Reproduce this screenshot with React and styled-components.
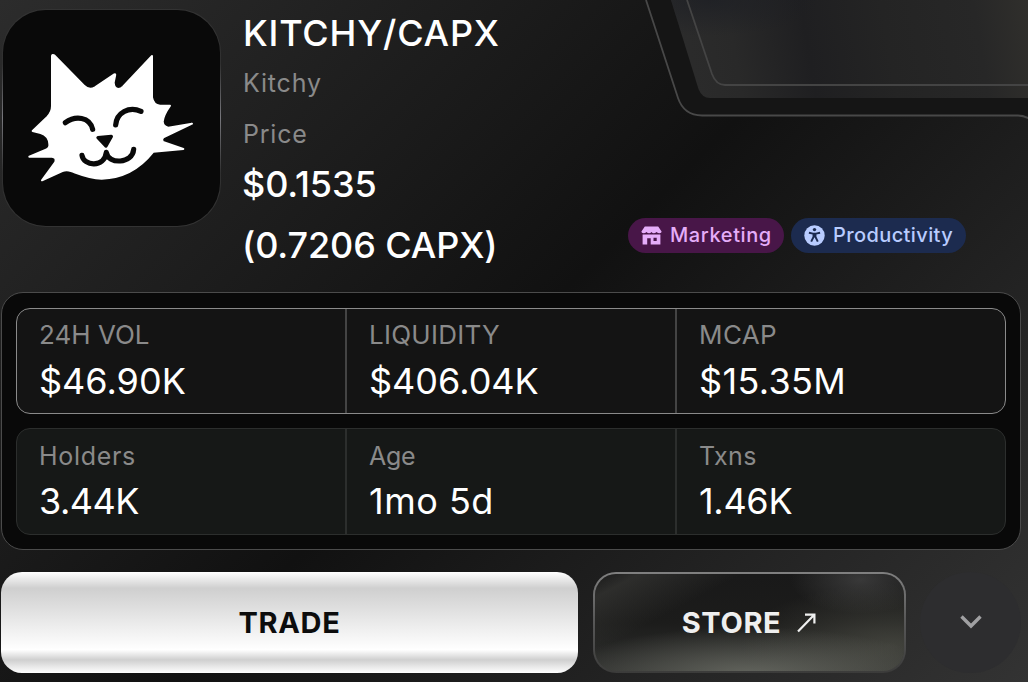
import React from "react";
import styled, { createGlobalStyle } from "styled-components";

const GlobalStyle = createGlobalStyle`
  * { box-sizing: border-box; }
  body {
    margin: 0;
    background: #1a1a1a;
    font-family: Inter, "Liberation Sans", sans-serif;
    -webkit-font-smoothing: antialiased;
  }
`;

const Page = styled.main`
  position: relative;
  width: 1028px;
  height: 682px;
  overflow: hidden;
  background: linear-gradient(135deg, #2c2c2c 0%, #111111 50%, #333333 100%);
`;

const Frame = styled.svg`
  position: absolute;
  top: 0;
  right: 0;
  width: 388px;
  height: 130px;
`;

const Content = styled.div`
  position: relative;
  display: flex;
  flex-direction: column;
  padding-left: 1px;
`;

const Header = styled.header`
  display: flex;
  height: 292px;
  padding: 9px 62px 0 1px;
`;

const Avatar = styled.div`
  flex: none;
  width: 219px;
  height: 218px;
  border-radius: 44px;
  padding: 1px;
  background: linear-gradient(180deg, #333 0%, #303030 25%, #77777c 50%, #303030 75%, #333 100%);
  svg { display: block; }
`;

const AvatarFace = styled.div`
  width: 217px;
  height: 216px;
  border-radius: 43px;
  overflow: hidden;
  background: #090909;
`;

const Identity = styled.div`
  display: flex;
  flex-direction: column;
  margin-left: 22px;
  padding-top: 2px;
  white-space: nowrap;
`;

const Title = styled.h1`
  margin: 0;
  font-size: 36px;
  font-weight: 500;
  line-height: 44px;
  letter-spacing: 0.8px;
  color: #fff;
`;

const Muted = styled.div`
  margin-top: ${(p) => p.$gap}px;
  font-size: 25px;
  font-weight: 400;
  line-height: 32px;
  letter-spacing: 0.8px;
  color: #8a8a8a;
`;

const Price = styled.div`
  margin: ${(p) => p.$gap}px 0 0 -1px;
  font-size: 36px;
  font-weight: 500;
  line-height: 44px;
  letter-spacing: -0.1px;
  color: #fff;
`;

const Chips = styled.div`
  display: flex;
  gap: 7px;
  align-self: flex-end;
  margin: 0 0 39px auto;
`;

const Chip = styled.span`
  display: flex;
  align-items: center;
  gap: 8px;
  width: ${(p) => p.$width}px;
  height: 35px;
  padding-left: 13px;
  border-radius: 18px;
  background: ${(p) => p.$bg};
  color: ${(p) => p.$fg};
  font-size: 20px;
  font-weight: 500;
  line-height: 34px;
  letter-spacing: ${(p) => p.$spacing}px;
  white-space: nowrap;
  svg { flex: none; }
`;

const ChipText = styled.span`
  height: 35px;
`;

const Panel = styled.section`
  display: flex;
  flex-direction: column;
  gap: 14px;
  width: 1020px;
  height: 258px;
  padding: 15px 14px 14px;
  border: 1px solid #4b4b4b;
  border-radius: 22px;
  background: #090909;
`;

const StatRow = styled.div`
  flex: none;
  display: grid;
  grid-template-columns: 330px 330px 1fr;
  height: ${(p) => (p.$bright ? 106 : 107)}px;
  border: 1px solid ${(p) => (p.$bright ? "#8a8a8a" : "#2c2e2d")};
  border-radius: 14px;
  background: ${(p) => (p.$bright ? "#141414" : "#161817")};
  --divider: ${(p) => (p.$bright ? "#444" : "#2c2e2d")};
  --top: ${(p) => (p.$bright ? 10 : 11)}px;
`;

const Stat = styled.div`
  padding: var(--top) 0 0 22px;
  white-space: nowrap;
  &:not(:last-child) { border-right: 2px solid var(--divider); }
`;

const StatLabel = styled.div`
  font-size: ${(p) => (p.$caps ? 26 : 25)}px;
  font-weight: 400;
  line-height: 32px;
  letter-spacing: ${(p) => p.$spacing}px;
  color: #8a8a8a;
`;

const StatValue = styled.div`
  margin-top: ${(p) => p.$gap}px;
  font-size: 36px;
  font-weight: 400;
  line-height: 44px;
  letter-spacing: ${(p) => p.$spacing}px;
  color: #fff;
`;

const Actions = styled.footer`
  display: flex;
  align-items: center;
  margin-top: 22px;
  height: 101px;
`;

const Button = styled.button`
  display: flex;
  align-items: center;
  justify-content: center;
  height: 101px;
  padding: 0;
  border: 0;
  font-family: inherit;
  font-size: 29px;
  font-weight: 700;
  letter-spacing: 0.65px;
`;

const TradeButton = styled(Button)`
  width: 577px;
  border-radius: 21px;
  color: #0c0c0c;
  background: linear-gradient(180deg, #fff 0%, #cfcfcf 16%, #f2f2f2 60%, #fff 77%, #cfcfcf 87%, #fff 100%);
`;

const StoreButton = styled(Button)`
  width: 313px;
  margin-left: 15px;
  padding-right: 1px;
  gap: 16px;
  color: #efefef;
  border: 2px solid transparent;
  border-radius: 23px;
  background:
    radial-gradient(ellipse 190px 48px at 50% 104%, rgba(108, 110, 102, 0.85), rgba(108, 110, 102, 0)) padding-box,
    radial-gradient(ellipse 150px 62px at 96% 74%, rgba(84, 85, 76, 0.6), rgba(84, 85, 76, 0)) padding-box,
    linear-gradient(152deg, rgba(60, 60, 58, 0) 0%, rgba(62, 62, 59, 0.55) 9%, rgba(26, 26, 26, 0) 30%, rgba(26, 26, 26, 0) 100%) padding-box,
    radial-gradient(ellipse 70px 34px at 86% 6%, rgba(70, 70, 70, 0.7), rgba(70, 70, 70, 0)) padding-box,
    linear-gradient(180deg, #191919, #1c1c1b 50%, #2f302e 100%) padding-box,
    linear-gradient(180deg, #808080, #5a5a5a 45%, #3b3b3a 100%) border-box;
`;

const MoreButton = styled(Button)`
  width: 101px;
  margin-left: 14px;
  padding-bottom: 1px;
  border-radius: 50%;
  background: #2d2d2f;
`;

function CatLogo() {
  return (
    <svg width="217" height="216" viewBox="9 30 651 648">
      <path
        fill="#fff"
        stroke="#fff"
        strokeWidth="6"
        strokeLinejoin="round"
        d="M156 168Q157 163 163 166L252 257Q267 272 285 262L343 223Q347 221 345 228L341 248Q342 266 355 267Q363 266 369 260L456 168V292Q460 315 480 317H510Q490 345 488 365Q490 381 505 383L576 371L490 412Q483 419 489 426L550 447L460 455C415 512 360 535 305 536C265 535 238 522 213 513Q200 508 187 513L126 541L166 486Q170 472 156 470H88L138 449Q150 444 148 432C147 412 138 404 122 399L98 393L142 351Q156 336 156 318Z"
      />
      <g fill="none" stroke="#090909" strokeWidth="15.5" strokeLinecap="round" strokeLinejoin="round">
        <path d="M196 368C226 346 269 350 278 388" />
        <path d="M347 375C350 338 387 318 423 334" />
        <path d="M246 466C251 499 313 504 319 457C324 494 398 492 401 448" />
      </g>
      <path d="M294 413L334 409L318 438Z" fill="#090909" stroke="#090909" strokeWidth="10" strokeLinejoin="round" />
    </svg>
  );
}

function StoreIcon() {
  return (
    <svg width="21" height="19" viewBox="0 0 21 19" fill="currentColor">
      <path d="M3.800 .6H17.200L20.600 5.400Q20.600 7.200 18.600 7.200Q16.800 7.200 15.600 6Q14 7.200 12.700 7.200Q11.500 7.200 10.500 6Q9.500 7.200 8 7.200Q6.600 7.200 5.500 6Q4.200 7.200 2.500 7.200Q.4 7.200 .4 5.400Z" />
      <path fillRule="evenodd" d="M1.600 8.600H19.400V18.500H9.700V12.200H6.200V18.500H1.600ZM12.500 11.800V15H15.700V11.800Z" />
    </svg>
  );
}

function PersonIcon() {
  return (
    <svg width="21" height="21" viewBox="0 0 21 21">
      <circle cx="10.500" cy="10.500" r="10.200" fill="currentColor" />
      <circle cx="10.500" cy="4.600" r="1.700" fill="#1c2b4f" />
      <path
        d="M4.900 7.700L9 8.600H12L16.100 7.700M9.500 8.800V12L7.200 16.600M11.500 8.800V12L13.800 16.600M10.500 9V12.600"
        fill="none"
        stroke="#1c2b4f"
        strokeWidth="1.900"
      />
    </svg>
  );
}

function FrameArt() {
  return (
    <Frame viewBox="640 0 388 130">
      <defs>
        <linearGradient id="band" x1="670" x2="1028" y1="60" y2="0" gradientUnits="userSpaceOnUse">
          <stop offset="0" stopColor="#2c2c2c" />
          <stop offset="0.18" stopColor="#292929" />
          <stop offset="0.38" stopColor="#1f1f21" />
          <stop offset="0.6" stopColor="#242424" />
          <stop offset="0.85" stopColor="#272727" />
          <stop offset="1" stopColor="#302f2c" />
        </linearGradient>
        <radialGradient id="shade" cx="0" cy="0" r="1" gradientUnits="userSpaceOnUse" gradientTransform="translate(710 0) scale(110 36)">
          <stop offset="0" stopColor="#1c1e24" stopOpacity="0.7" />
          <stop offset="1" stopColor="#1c1e24" stopOpacity="0" />
        </radialGradient>
      </defs>
      <path d="M646 0L678 98Q684 115.500 702 115.500H1028V0Z" fill="#151515" />
      <path d="M671 0L698.500 89Q702 98 710 98H1028V0Z" fill="url(#band)" />
      <path d="M671 0L698.500 89Q702 98 710 98H1028V0Z" fill="url(#shade)" />
      <path d="M687 0L712 74Q716 85 725 85H1028" fill="none" stroke="#444" strokeWidth="1.800" />
      <path d="M646 0L678 98Q684 115.500 702 115.500H1018Q1024 115.500 1030 119" fill="none" stroke="#484848" strokeWidth="1.800" />
    </Frame>
  );
}

const marketStats = [
  { label: "24H VOL", value: "$46.90K", labelSpacing: 0, valueSpacing: 0 },
  { label: "LIQUIDITY", value: "$406.04K", labelSpacing: 0.26, valueSpacing: 0 },
  { label: "MCAP", value: "$15.35M", labelSpacing: 0.4, valueSpacing: 0.35 },
];

const tokenStats = [
  { label: "Holders", value: "3.44K", labelSpacing: 0.7, valueSpacing: -0.5 },
  { label: "Age", value: "1mo 5d", labelSpacing: -0.3, valueSpacing: 0.5 },
  { label: "Txns", value: "1.46K", labelSpacing: 0.4, valueSpacing: -0.3 },
];

function Stats({ items, bright }) {
  return (
    <StatRow $bright={bright}>
      {items.map((s) => (
        <Stat key={s.label}>
          <StatLabel $caps={bright} $spacing={s.labelSpacing}>{s.label}</StatLabel>
          <StatValue $gap={bright ? 8 : 7} $spacing={s.valueSpacing}>{s.value}</StatValue>
        </Stat>
      ))}
    </StatRow>
  );
}

export default function App() {
  return (
    <Page>
      <GlobalStyle />
      <FrameArt />
      <Content>
        <Header>
          <Avatar>
            <AvatarFace><CatLogo /></AvatarFace>
          </Avatar>
          <Identity>
            <Title>KITCHY/CAPX</Title>
            <Muted $gap={12}>Kitchy</Muted>
            <Muted $gap={19}>Price</Muted>
            <Price $gap={12}>$0.1535</Price>
            <Price $gap={17}>(0.7206 CAPX)</Price>
          </Identity>
          <Chips>
            <Chip $bg="#481648" $fg="#e5adf9" $width={156} $spacing={0.6}>
              <StoreIcon />
              <ChipText>Marketing</ChipText>
            </Chip>
            <Chip $bg="#1c2b4f" $fg="#b8ccff" $width={175} $spacing={0.4}>
              <PersonIcon />
              <ChipText>Productivity</ChipText>
            </Chip>
          </Chips>
        </Header>
        <Panel>
          <Stats items={marketStats} bright />
          <Stats items={tokenStats} />
        </Panel>
        <Actions>
          <TradeButton>TRADE</TradeButton>
          <StoreButton>
            STORE
            <svg width="19" height="20" viewBox="0 0 19 20" fill="none" stroke="currentColor" strokeWidth="2.200">
              <path d="M1 18.500L17 2M8 1.600H17.400V10.500" />
            </svg>
          </StoreButton>
          <MoreButton aria-label="More">
            <svg width="22" height="14" viewBox="0 0 22 14" fill="none" stroke="#a0a0a2" strokeWidth="3.400">
              <path d="M1.500 1.500L11 11L20.500 1.500" />
            </svg>
          </MoreButton>
        </Actions>
      </Content>
    </Page>
  );
}
